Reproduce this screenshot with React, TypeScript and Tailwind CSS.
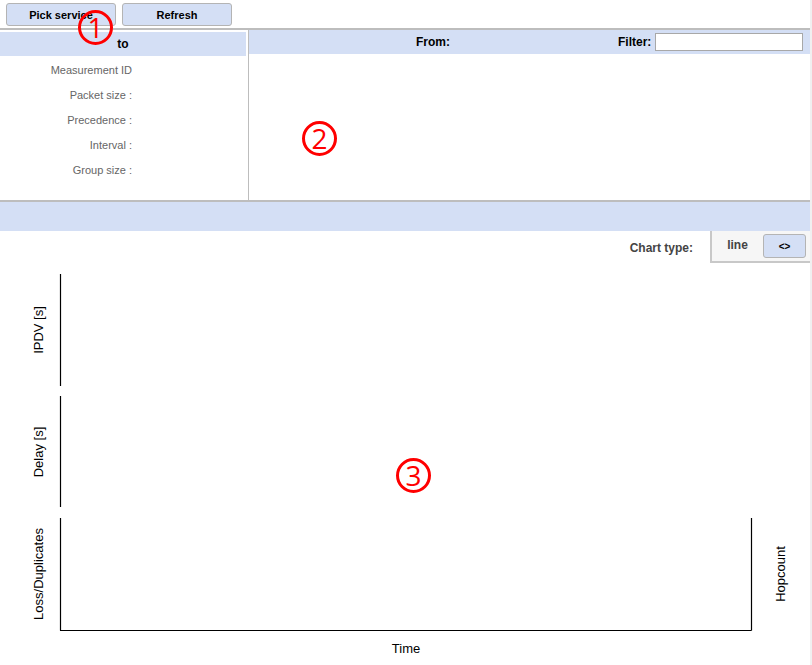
import React from "react";

const BLUE = "bg-[#d4dff5]";

function Marker({ n, cls }: { n: string; cls: string }) {
  return (
    <div
      className={`absolute ${cls} w-[35px] h-[35px] rounded-full border-[3px] border-[#ff0000] flex items-center justify-center text-[#ff0000] text-[28px] leading-none`}
      style={{ fontFamily: '"Open Sans", "DejaVu Sans", sans-serif' }}
    >
      <span className="-mt-[1px]">{n}</span>
    </div>
  );
}

export default function App() {
  const rows = ["Measurement ID", "Packet size :", "Precedence :", "Interval :", "Group size :"];
  return (
    <div
      className="relative w-[812px] h-[665px] overflow-hidden bg-white flex"
      style={{ fontFamily: '"Liberation Sans", Arial, sans-serif' }}
    >
      <div className="w-[810px] flex flex-col">
        {/* toolbar */}
        <div className="h-[28px] flex items-start gap-[6px] pt-[3px] pl-[6px]">
          <button className={`w-[110px] h-[23px] ${BLUE} border border-[#b4b4b4] rounded-[3px] text-[11px] font-bold text-black pt-[2px]`}>
            Pick service
          </button>
          <button className={`w-[110px] h-[23px] ${BLUE} border border-[#b4b4b4] rounded-[3px] text-[11px] font-bold text-black pt-[2px]`}>
            Refresh
          </button>
        </div>
        <div className="h-[2px] bg-[#bdbdbd]" />
        {/* main */}
        <div className="h-[170px] flex">
          <div className="w-[249px] border-r border-[#bdbdbd] flex flex-col">
            <div className={`mt-[2px] mr-[2px] h-[24px] ${BLUE} flex items-center justify-center text-[12px] font-bold text-black`}>
              to
            </div>
            <div className="pt-[2px] flex flex-col">
              {rows.map((r) => (
                <div key={r} className="h-[25px] w-[132px] flex items-center justify-end text-[11px] text-[#666]">
                  {r}
                </div>
              ))}
            </div>
          </div>
          <div className="flex-1 flex flex-col">
            <div className={`h-[24px] ${BLUE} flex items-center text-[12px] font-bold text-black`}>
              <div className="w-[368px] text-center">From:</div>
              <div className="ml-[1px]">Filter:</div>
              <div className="ml-[4px] w-[148px] h-[18px] bg-white border border-[#a8a8a8]" />
            </div>
          </div>
        </div>
        <div className="h-[2px] bg-[#bdbdbd]" />
        <div className={`h-[29px] ${BLUE}`} />
        {/* chart type */}
        <div className="h-[32px] flex justify-end">
          <div className="flex items-center pr-[17px] pt-[2px] text-[12px] font-bold text-[#444]">Chart type:</div>
          <div className="w-[100px] border-l-2 border-b-2 border-[#c8c8c8] bg-[#f6f6f6] flex items-center">
            <div className="w-[51px] text-center text-[12px] font-bold text-[#444] pb-[3px]">line</div>
            <button className={`w-[43px] h-[24px] ${BLUE} border border-[#b4b4b4] rounded-[3px] text-[10px] font-bold text-black`}>
              &lt;&gt;
            </button>
          </div>
        </div>
        {/* charts */}
        <div className="flex-1">
          <svg width="810" height="402" className="block" style={{ fontFamily: '"Liberation Sans", Arial, sans-serif' }}>
            <g stroke="#000" strokeWidth="1.2" fill="none">
              <line x1="60.5" y1="11" x2="60.5" y2="123" />
              <line x1="60.5" y1="133" x2="60.5" y2="244" />
              <line x1="60.5" y1="255" x2="60.5" y2="367.5" />
              <line x1="60" y1="367.5" x2="751.5" y2="367.5" />
              <line x1="751.5" y1="255" x2="751.5" y2="367.5" />
            </g>
            <g fontSize="13" fill="#000" textAnchor="middle" dominantBaseline="central">
              <text transform="translate(38 67) rotate(-90)">IPDV [s]</text>
              <text transform="translate(38 189) rotate(-90)">Delay [s]</text>
              <text transform="translate(38 311) rotate(-90)">Loss/Duplicates</text>
              <text transform="translate(780 311) rotate(-90)">Hopcount</text>
              <text x="406" y="385">Time</text>
            </g>
          </svg>
        </div>
      </div>
      <div className="w-[2px] bg-[#f0f0f0]" />

      <Marker n="1" cls="left-[78px] top-[10px]" />
      <Marker n="2" cls="left-[302px] top-[121px]" />
      <Marker n="3" cls="left-[396px] top-[458px]" />
    </div>
  );
}
